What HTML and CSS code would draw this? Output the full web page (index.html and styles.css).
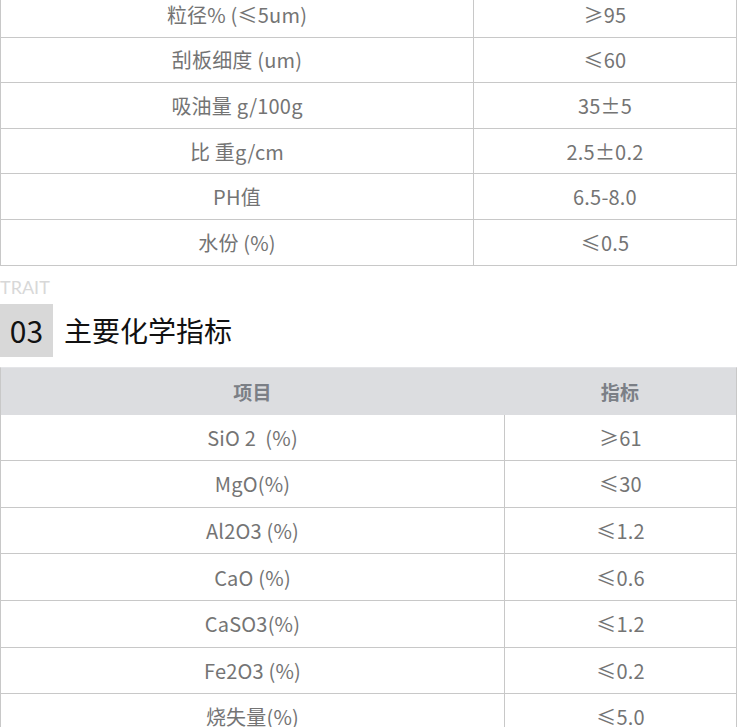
FILE: index.html
```html
<!DOCTYPE html>
<html lang="zh-CN">
<head>
<meta charset="utf-8">
<link rel="stylesheet" href="styles.css">
</head>
<body>
<div class="page">
  <div class="table t1">
    <div class="row"><div class="cell">粒径% (≤5um)</div><div class="cell val">≥95</div></div>
    <div class="row"><div class="cell">刮板细度 (um)</div><div class="cell val">≤60</div></div>
    <div class="row"><div class="cell">吸油量 g/100g</div><div class="cell val">35±5</div></div>
    <div class="row"><div class="cell">比 重g/cm</div><div class="cell val">2.5±0.2</div></div>
    <div class="row"><div class="cell">PH值</div><div class="cell val">6.5-8.0</div></div>
    <div class="row"><div class="cell">水份 (%)</div><div class="cell val">≤0.5</div></div>
  </div>

  <div class="trait">TRAIT</div>
  <div class="heading">
    <div class="num">03</div>
    <h2 class="title">主要化学指标</h2>
  </div>

  <div class="table t2">
    <div class="row head"><div class="cell">项目</div><div class="cell val">指标</div></div>
    <div class="row"><div class="cell">SiO 2&nbsp; (%)</div><div class="cell val">≥61</div></div>
    <div class="row"><div class="cell">MgO(%)</div><div class="cell val">≤30</div></div>
    <div class="row"><div class="cell">Al2O3 (%)</div><div class="cell val">≤1.2</div></div>
    <div class="row"><div class="cell">CaO (%)</div><div class="cell val">≤0.6</div></div>
    <div class="row"><div class="cell">CaSO3(%)</div><div class="cell val">≤1.2</div></div>
    <div class="row"><div class="cell">Fe2O3 (%)</div><div class="cell val">≤0.2</div></div>
    <div class="row"><div class="cell">烧失量(%)</div><div class="cell val">≤5.0</div></div>
  </div>
</div>
</body>
</html>
```

FILE: styles.css
```css
html, body {
  margin: 0;
  padding: 0;
  background: #fff;
}

body {
  font-family: "Noto Sans CJK SC", "Noto Sans", sans-serif;
  color: #666;
  overflow: hidden;
}

.page {
  width: 737px;
  margin-top: -8px;
}

.table {
  width: 737px;
  box-sizing: border-box;
  border-left: 1px solid #c8c8c8;
  border-right: 1px solid #c8c8c8;
}

.row {
  display: grid;
  border-bottom: 1px solid #c8c8c8;
  box-sizing: border-box;
}

.t1 .row {
  grid-template-columns: 472px 1fr;
  height: 45.6px;
}

.t2 {
  border-top: 1px solid #e4e5e8;
}

.t2 .row {
  grid-template-columns: 503px 1fr;
  height: 46.6px;
}

.cell {
  display: flex;
  align-items: center;
  justify-content: center;
  font-size: 20px;
  letter-spacing: 0.2px;
  color: #747474;
  white-space: pre;
}

.cell.val {
  border-left: 1px solid #c8c8c8;
}

.t2 .row.head {
  background: #dcdde0;
  border-bottom: none;
  height: 47px;
}

.t2 .row.head .cell {
  font-size: 19px;
  font-weight: 700;
  color: #7b7f86;
}

.t2 .row.head .cell.val {
  border-left: none;
}

.trait {
  font-family: "Lato", "Noto Sans", sans-serif;
  font-size: 18px;
  line-height: 20px;
  color: #d8d8d8;
  margin-top: 11px;
}

.heading {
  display: flex;
  align-items: center;
  gap: 11px;
  margin-top: 7px;
  margin-bottom: 10px;
}

.num {
  width: 53px;
  height: 53px;
  background: #d8d8d8;
  color: #111;
  font-size: 30px;
  display: flex;
  align-items: center;
  justify-content: center;
}

.title {
  margin: 0;
  font-size: 28px;
  font-weight: 400;
  color: #111;
}
```
